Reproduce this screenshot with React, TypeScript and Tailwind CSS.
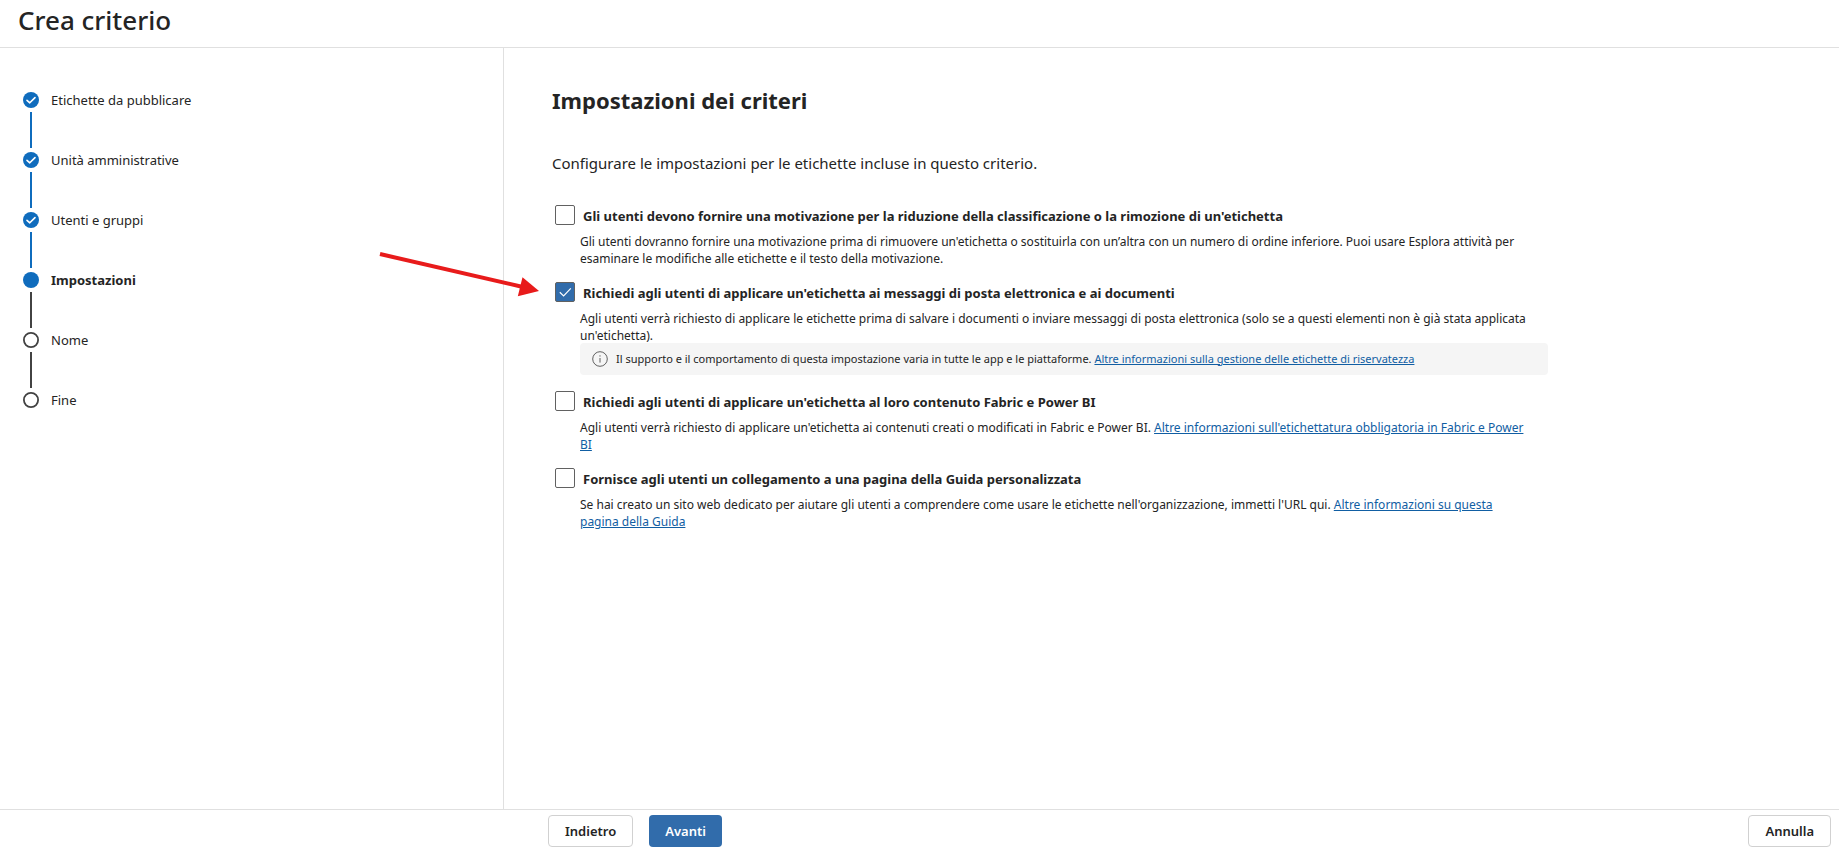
import { ReactNode, useState } from 'react';

type StepState = 'done' | 'current' | 'todo';

const steps: { label: string; state: StepState }[] = [
  { label: 'Etichette da pubblicare', state: 'done' },
  { label: 'Unità amministrative', state: 'done' },
  { label: 'Utenti e gruppi', state: 'done' },
  { label: 'Impostazioni', state: 'current' },
  { label: 'Nome', state: 'todo' },
  { label: 'Fine', state: 'todo' },
];

function StepIcon({ state }: { state: StepState }) {
  if (state === 'todo') {
    return (
      <svg className="size-4" viewBox="0 0 16 16" fill="none" aria-hidden="true">
        <circle cx="8" cy="8" r="7.1" stroke="#424242" strokeWidth="1.8" />
      </svg>
    );
  }

  return (
    <svg className="size-4" viewBox="0 0 16 16" fill="none" aria-hidden="true">
      <circle cx="8" cy="8" r="8" fill="#0f6cbd" />
      {state === 'done' && (
        <path
          d="M4 8.3 6.8 10.8 12 5.6"
          stroke="#fff"
          strokeWidth="1.6"
          strokeLinecap="round"
          strokeLinejoin="round"
        />
      )}
    </svg>
  );
}

function Steps() {
  return (
    <ol className="flex flex-col">
      {steps.map((step, i) => (
        <li key={step.label} className="flex gap-3">
          <div className="flex flex-col items-center gap-1">
            <StepIcon state={step.state} />
            {i < steps.length - 1 && (
              <span
                className={
                  step.state === 'done'
                    ? 'mb-1 h-9 w-0.5 bg-[#0f6cbd]'
                    : 'mb-1 h-9 w-0.5 bg-[#424242]'
                }
              />
            )}
          </div>
          <span
            className={
              step.state === 'current'
                ? 'text-[13px] leading-4 font-bold'
                : 'text-[13px] leading-4'
            }
          >
            {step.label}
          </span>
        </li>
      ))}
    </ol>
  );
}

function Link({ children }: { children: ReactNode }) {
  return (
    <a href="#" className="text-[#115ea3] underline">
      {children}
    </a>
  );
}

interface SettingProps {
  id: string;
  label: string;
  defaultChecked?: boolean;
  note?: ReactNode;
  children: ReactNode;
}

function Setting({ id, label, defaultChecked = false, note, children }: SettingProps) {
  const [checked, setChecked] = useState(defaultChecked);

  return (
    <div className="pl-[3px]">
      <div className="flex h-5 items-center gap-2">
        <span className="grid size-5 shrink-0">
          <input
            id={id}
            type="checkbox"
            checked={checked}
            onChange={(e) => setChecked(e.target.checked)}
            className="col-start-1 row-start-1 size-5 appearance-none rounded-xs border border-[#616161] bg-white checked:bg-[#316cab]"
          />
          {checked && (
            <svg
              className="pointer-events-none col-start-1 row-start-1 size-5"
              viewBox="0 0 20 20"
              fill="none"
              aria-hidden="true"
            >
              <path d="M4.8 10.2 8.6 13.9 15.8 6.4" stroke="#fff" strokeWidth="1.2" />
            </svg>
          )}
        </span>
        <label htmlFor={id} className="pt-0.5 text-[13px] leading-5 font-bold">
          {label}
        </label>
      </div>
      <div className="pl-[25px]">
        <p className="mt-2 -mb-px pr-5 text-xs leading-[17px]">{children}</p>
        {note && (
          <div className="flex min-h-8 items-center gap-2 rounded bg-[#f5f5f5] px-3 text-[11px]">
            <InfoIcon />
            <p>{note}</p>
          </div>
        )}
      </div>
    </div>
  );
}

function InfoIcon() {
  return (
    <svg className="size-4 shrink-0" viewBox="0 0 16 16" fill="none" aria-hidden="true">
      <circle cx="8" cy="8" r="7.3" stroke="#616161" strokeWidth="1" />
      <path d="M8 7v4.6" stroke="#616161" strokeWidth="1" />
      <circle cx="8" cy="4.9" r="0.7" fill="#616161" />
    </svg>
  );
}

function Arrow() {
  return (
    <svg
      className="pointer-events-none absolute top-[250px] left-[378px] h-[50px] w-[164px]"
      viewBox="0 0 164 50"
      aria-hidden="true"
    >
      <path d="M2 4 145 37" stroke="#e81b1b" strokeWidth="4" />
      <path d="M144.5 27.2 161 41 139.8 46.2z" fill="#e81b1b" />
    </svg>
  );
}

export default function App() {
  return (
    <div className="relative flex min-h-screen flex-col bg-white font-['Noto_Sans','Open_Sans',sans-serif] text-[#242424]">
      <header className="flex h-12 items-center border-b border-[#e0e0e0] px-[18px] pb-2">
        <h1 className="text-[26px] leading-8 font-medium">Crea criterio</h1>
      </header>

      <div className="flex flex-1">
        <nav className="w-[504px] shrink-0 border-r border-[#e0e0e0] pt-11 pl-[23px]">
          <Steps />
        </nav>

        <main className="flex-1 pt-9 pl-12">
          <h2 className="text-[22px] leading-8 font-bold">Impostazioni dei criteri</h2>
          <p className="mt-[37px] text-[15px] leading-5">
            Configurare le impostazioni per le etichette incluse in questo criterio.
          </p>

          <div className="mt-8 flex max-w-[996px] flex-col gap-4">
            <Setting
              id="motivazione"
              label="Gli utenti devono fornire una motivazione per la riduzione della classificazione o la rimozione di un'etichetta"
            >
              Gli utenti dovranno fornire una motivazione prima di rimuovere un'etichetta o sostituirla
              con un’altra con un numero di ordine inferiore. Puoi usare Esplora attività per esaminare
              le modifiche alle etichette e il testo della motivazione.
            </Setting>

            <Setting
              id="posta"
              label="Richiedi agli utenti di applicare un'etichetta ai messaggi di posta elettronica e ai documenti"
              defaultChecked
              note={
                <>
                  Il supporto e il comportamento di questa impostazione varia in tutte le app e le
                  piattaforme.{' '}
                  <Link>Altre informazioni sulla gestione delle etichette di riservatezza</Link>
                </>
              }
            >
              Agli utenti verrà richiesto di applicare le etichette prima di salvare i documenti o
              inviare messaggi di posta elettronica (solo se a questi elementi non è già stata applicata
              un'etichetta).
            </Setting>

            <Setting
              id="fabric"
              label="Richiedi agli utenti di applicare un'etichetta al loro contenuto Fabric e Power BI"
            >
              Agli utenti verrà richiesto di applicare un'etichetta ai contenuti creati o modificati in
              Fabric e Power BI.{' '}
              <Link>Altre informazioni sull'etichettatura obbligatoria in Fabric e Power BI</Link>
            </Setting>

            <Setting
              id="guida"
              label="Fornisce agli utenti un collegamento a una pagina della Guida personalizzata"
            >
              Se hai creato un sito web dedicato per aiutare gli utenti a comprendere come usare le
              etichette nell'organizzazione, immetti l'URL qui.{' '}
              <Link>Altre informazioni su questa pagina della Guida</Link>
            </Setting>
          </div>
        </main>
      </div>

      <footer className="flex items-center border-t border-[#e0e0e0] pt-[5px] pr-2 pb-px pl-[548px] text-[13px] font-semibold">
        <button className="h-8 rounded border border-[#d1d1d1] bg-white px-4 pt-px">Indietro</button>
        <button className="ml-4 h-8 rounded bg-[#316cab] px-4 pt-px text-white">Avanti</button>
        <button className="ml-auto h-8 rounded border border-[#d1d1d1] bg-white px-4 pt-px">
          Annulla
        </button>
      </footer>

      <Arrow />
    </div>
  );
}
